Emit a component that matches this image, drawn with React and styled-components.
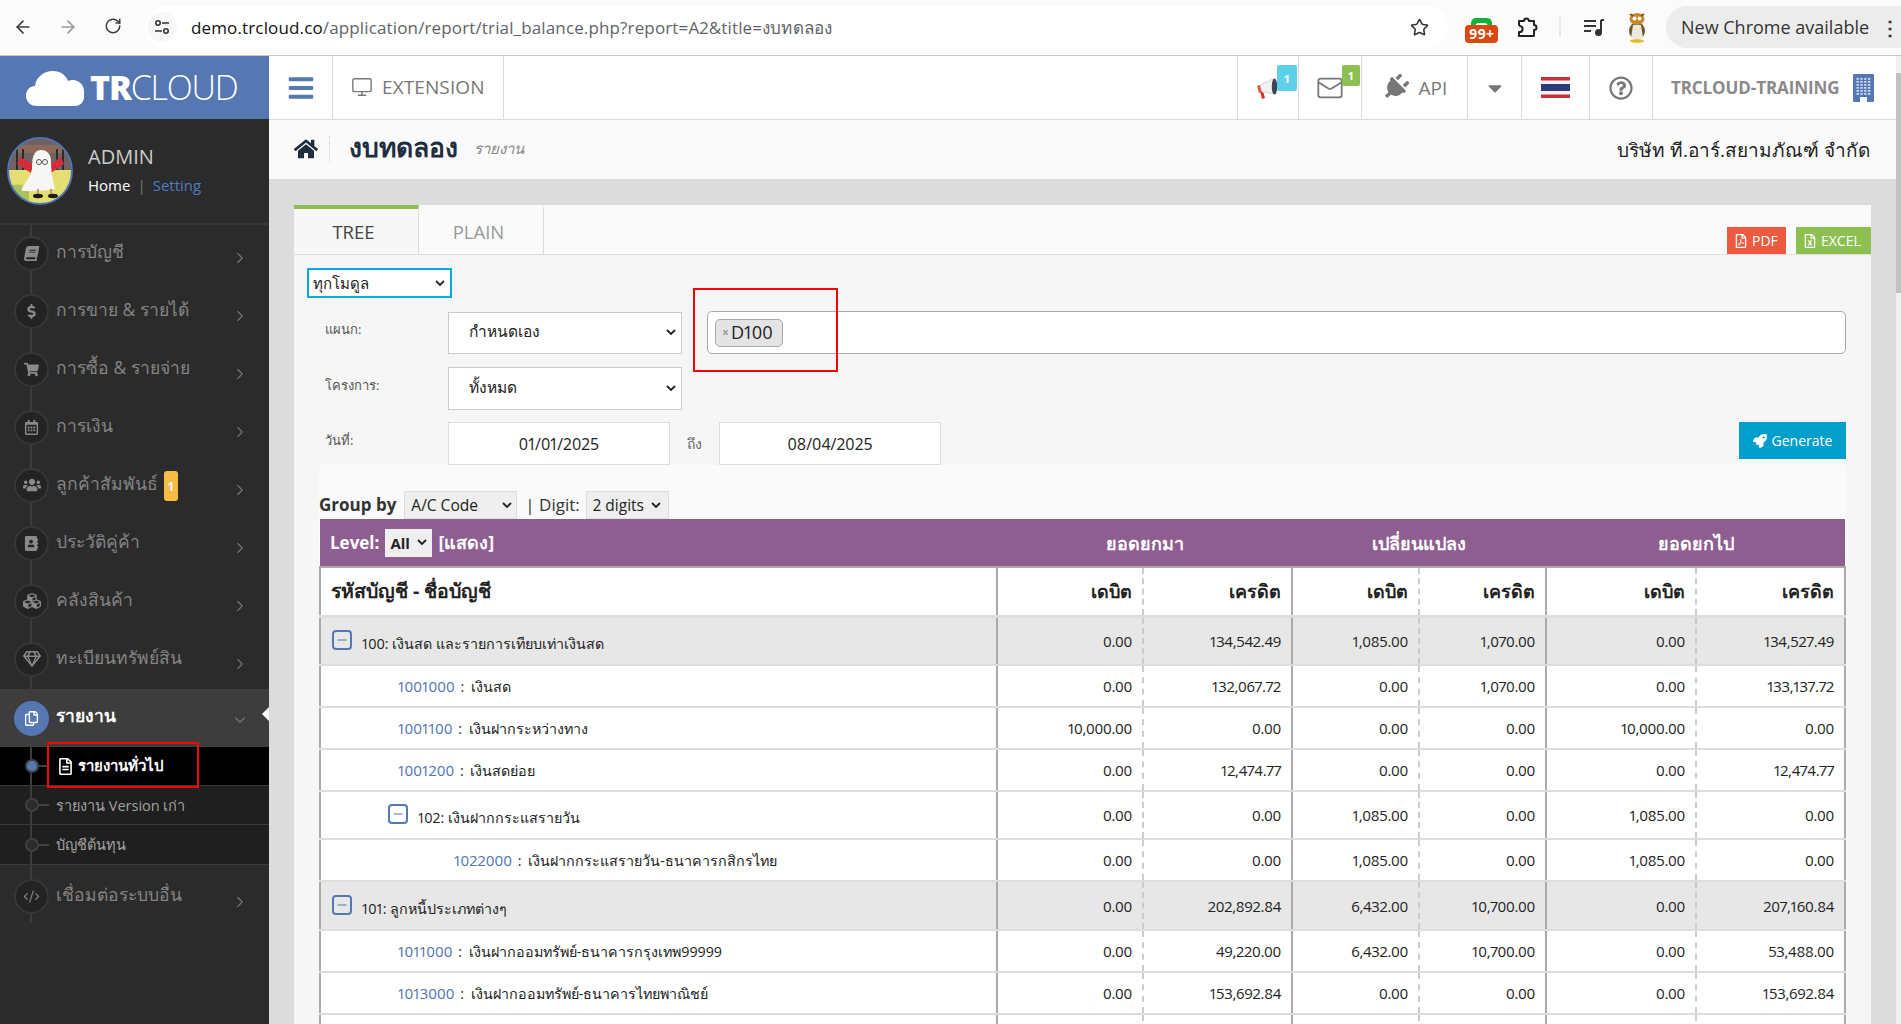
import React from 'react'
import styled, { createGlobalStyle, css } from 'styled-components'
import { ArrowLeft, ArrowRight, RotateCw, Star, Monitor, ChevronRight, ChevronDown, Mail, Minus, CodeXml } from 'lucide-react'
import {
    FaBook, FaDollarSign, FaShoppingCart, FaRegCalendarAlt, FaUsers, FaAddressBook, FaCubes, FaRegGem,
    FaRegCopy, FaRegFileAlt, FaHome, FaBars, FaPlug, FaCaretDown, FaRegQuestionCircle,
    FaRocket, FaRegFilePdf, FaRegFileExcel,
} from 'react-icons/fa'

const Global = createGlobalStyle`
    html, body { margin: 0; height: 100%; overflow: hidden; background: #dcdcdc; }
    body { font-family: "Open Sans", "Noto Sans", sans-serif; color: #222; font-variant-numeric: proportional-nums; }
    * { box-sizing: border-box; }
`;

const arrowImage = `url("data:image/svg+xml,%3Csvg xmlns='http://www.w3.org/2000/svg' width='10' height='7' viewBox='0 0 10 7' fill='none' stroke='%23222' stroke-width='1.8'%3E%3Cpath d='M1 1l4 4 4-4'/%3E%3C/svg%3E")`;

const selectBase = css`
    appearance: none;
    font: inherit;
    border-radius: 0;
    color: #222;
    background-image: ${arrowImage};
    background-repeat: no-repeat;
    background-position: right ${p => p.$ar || 6}px center;
`;

const Shell = styled.div`
    width: 1901px;
    height: 1024px;
    display: flex;
    flex-direction: column;
    overflow: hidden;
`;

/* browser chrome */
const Chrome = styled.div`
    height: 56px;
    flex: none;
    display: flex;
    align-items: center;
    background: #fbfbfb;
    border-bottom: 1px solid #c9c9c9;
    padding-bottom: 1px;
`;

const NavBtn = styled.span`
    width: 45px;
    display: flex;
    justify-content: center;
    color: ${p => p.$off ? '#9a9a9a' : '#3c3c3c'};
`;

const NavGroup = styled.div`
    display: flex;
    width: 145px;
    flex: none;
`;

const Omnibox = styled.div`
    width: 1303px;
    height: 42px;
    border-radius: 21px;
    background: #fff;
    display: flex;
    align-items: center;
    padding: 0 19px 0 2px;
    flex: none;
`;

const Tune = styled.span`
    width: 30px;
    height: 30px;
    border-radius: 50%;
    background: #f7f7f7;
    display: flex;
    align-items: center;
    justify-content: center;
    margin-right: 14px;
`;

const Url = styled.div`
    flex: 1;
    font-size: 17px;
    letter-spacing: 0.14px;
    color: #5f6368;
    white-space: nowrap;
    b { font-weight: 400; color: #111; }
`;

const ChromeRight = styled.div`
    flex: 1;
    display: flex;
    align-items: center;
    padding-left: 17px;
`;

const LineIcon = styled.div`
    position: relative;
    width: 33px;
    height: 28px;
    margin: 4px 18px 0 0;
`;

const LineBadge = styled.span`
    position: absolute;
    left: 0;
    bottom: 0;
    width: 33px;
    height: 18px;
    border-radius: 4px;
    background: #d9480f;
    color: #fff;
    font-size: 14px;
    font-weight: 700;
    line-height: 18px;
    text-align: center;
`;

const ChromeDivider = styled.span`
    width: 2px;
    height: 20px;
    background: #e8e8e8;
    margin: 0 22px 0 21px;
`;

const UpdatePill = styled.div`
    margin-left: 17px;
    width: 236px;
    height: 42px;
    border-radius: 21px 0 0 21px;
    background: #ececec;
    font-size: 18px;
    color: #333;
    display: flex;
    align-items: center;
    padding-left: 15px;
    white-space: nowrap;
`;

const Dots = styled.span`
    margin-left: 11px;
    font-weight: 700;
    font-size: 20px;
`;

/* app frame */
const Frame = styled.div`
    flex: 1;
    min-height: 0;
    display: flex;
`;

const PageCol = styled.div`
    flex: 1;
    min-width: 0;
    display: flex;
    flex-direction: column;
`;

const Scrollbar = styled.div`
    width: 5px;
    flex: none;
    background: #f1f1f1;
    padding-top: 17px;
    &::after {
        content: "";
        display: block;
        height: 220px;
        background: #c1c1c1;
    }
`;

const TopRow = styled.div`
    height: 63px;
    flex: none;
    display: flex;
    background: #fff;
`;

const LogoBlock = styled.div`
    width: 269px;
    flex: none;
    background: #5578b3;
    color: #fff;
    display: flex;
    align-items: center;
    padding-left: 26px;
`;

const LogoText = styled.div`
    margin: -2px 0 0 6px;
    font-size: 34px;
    font-weight: 300;
    letter-spacing: -1.2px;
    font-family: "Open Sans", sans-serif;
    b { font-weight: 800; }
`;

const Burger = styled.div`
    width: 64px;
    display: flex;
    align-items: center;
    justify-content: center;
    color: #5578b3;
    border-right: 1px solid #dcdcdc;
    font-size: 28px;
`;

const ExtBtn = styled.div`
    width: 171px;
    display: flex;
    align-items: center;
    gap: 9px;
    padding: 0 0 2px 18px;
    color: #777;
    font-size: 19px;
    letter-spacing: 0.1px;
    border-right: 1px solid #dcdcdc;
`;

const TopSpacer = styled.div`
    flex: 1;
`;

const TopCell = styled.div`
    position: relative;
    width: ${p => p.$w}px;
    flex: none;
    display: flex;
    align-items: center;
    justify-content: center;
    gap: 10px;
    color: #777;
    font-size: 19px;
    border-left: 1px solid #dcdcdc;
`;

const PlugIcon = styled(FaPlug)`
    transform: rotate(45deg);
`;

const TopBadge = styled.span`
    position: absolute;
    top: 9px;
    right: ${p => p.$r}px;
    width: ${p => p.$w}px;
    height: ${p => p.$h}px;
    background: ${p => p.$bg};
    border-radius: 2px;
    color: #fff;
    font-size: 11px;
    font-weight: 700;
    display: flex;
    align-items: center;
    justify-content: center;
`;

const TrainingCell = styled.div`
    flex: none;
    width: 244px;
    display: flex;
    align-items: center;
    gap: 14px;
    padding-left: 18px;
    border-left: 1px solid #dcdcdc;
    color: #8a8a8a;
    font-size: 17px;
    font-weight: 700;
    letter-spacing: -0.1px;
    white-space: nowrap;
`;

const Body = styled.div`
    flex: 1;
    min-height: 0;
    display: flex;
`;

/* sidebar */
const Side = styled.aside`
    width: 269px;
    flex: none;
    background: #2b2b2b;
    display: flex;
    flex-direction: column;
`;

const UserBox = styled.div`
    height: 106px;
    flex: none;
    display: flex;
    padding: 18px 0 0 7px;
    border-bottom: 2px solid #363636;
`;

const UserText = styled.div`
    margin-left: 15px;
    padding-top: 6px;
`;

const UserName = styled.div`
    font-size: 20px;
    line-height: 28px;
    color: #ccc;
`;

const UserLinks = styled.div`
    margin-top: 4px;
    font-size: 15px;
    color: #fff;
    span { color: #777; margin: 0 7px; }
    a { color: #4f7cc0; }
`;

const MenuItem = styled.div`
    position: relative;
    height: 58px;
    display: flex;
    align-items: center;
    padding: ${p => p.$pt || 0}px 0 0 14px;
    background: ${p => p.$active ? '#3d3d3d' : 'transparent'};
    color: ${p => p.$active ? '#fff' : '#858585'};
    font-size: 17.5px;
    font-weight: ${p => p.$active ? 700 : 400};
    &::before {
        content: "";
        position: absolute;
        left: 30px;
        top: 0;
        bottom: 0;
        width: 2px;
        background: #3c3c3c;
    }
`;

const MenuIcon = styled.span`
    position: relative;
    z-index: 1;
    width: 35px;
    height: 35px;
    border-radius: 50%;
    flex: none;
    margin-top: ${p => p.$active ? 0 : -2}px;
    display: flex;
    align-items: center;
    justify-content: center;
    background: ${p => p.$active ? '#5578b3' : '#232323'};
    border: 2px solid ${p => p.$active ? '#5578b3' : '#363636'};
    color: ${p => p.$active ? '#fff' : '#8a8a8a'};
    font-size: ${p => p.$big ? 18 : 15}px;
`;

const SlantBook = styled(FaBook)`
    transform: skewX(-10deg);
`;

const MenuLabel = styled.span`
    margin-left: 7px;
    margin-top: -5px;
    white-space: nowrap;
`;

const MenuBadge = styled.span`
    margin-left: 6px;
    width: 14px;
    height: 30px;
    border-radius: 3px;
    background: #f6bb42;
    color: #fff;
    font-size: 12px;
    font-weight: 700;
    display: flex;
    align-items: center;
    justify-content: center;
`;

const Chev = styled.span`
    position: absolute;
    left: 231px;
    top: ${p => p.$top || 24}px;
    color: #777;
    display: flex;
`;

const Notch = styled.span`
    position: absolute;
    right: 0;
    top: 18px;
    border: 7px solid transparent;
    border-right-color: #fff;
    border-left: 0;
`;

const SubItem = styled.div`
    position: relative;
    z-index: ${p => p.$on ? 2 : 'auto'};
    height: ${p => p.$h || 39}px;
    display: flex;
    align-items: center;
    padding-left: 56px;
    background: ${p => p.$on ? '#000' : '#1f1f1f'};
    color: ${p => p.$on ? '#fff' : '#a2a2a2'};
    font-size: ${p => p.$on ? 15 : 14.5}px;
    border-bottom: 1px solid #3a3a3a;
    &::before {
        content: "";
        position: absolute;
        left: 30px;
        top: 0;
        bottom: 0;
        width: 2px;
        background: #3c3c3c;
    }
`;

const SubDot = styled.span`
    position: absolute;
    left: 25px;
    top: 50%;
    margin-top: -7px;
    width: 14px;
    height: 14px;
    border-radius: 50%;
    background: ${p => p.$on ? '#5578b3' : '#2c2c2c'};
    border: 2px solid #404040;
    &::after {
        content: "";
        position: absolute;
        left: 12px;
        top: 4px;
        width: 10px;
        height: 2px;
        background: #404040;
    }
`;

const RedMark = styled.span`
    position: absolute;
    z-index: 3;
    border: 2px solid #f00;
    left: ${p => p.$l}px;
    top: ${p => p.$t}px;
    width: ${p => p.$w}px;
    height: ${p => p.$h}px;
    pointer-events: none;
`;

const SubOnLabel = styled.span`
    display: flex;
    align-items: center;
    gap: 4px;
    margin-left: 1px;
    font-weight: 600;
    white-space: nowrap;
`;

/* main */
const Main = styled.main`
    flex: 1;
    min-width: 0;
    display: flex;
    flex-direction: column;
    background: #dcdcdc;
`;

const Crumb = styled.div`
    height: 60px;
    flex: none;
    background: #fafafa;
    border-top: 1px solid #dcdcdc;
    display: flex;
    align-items: center;
    padding: 0 26px 0 25px;
`;

const HomeBtn = styled.span`
    display: flex;
    width: 36px;
    height: 26px;
    margin-top: -2px;
    align-items: center;
    color: #1e2d40;
    font-size: 24px;
    border-right: 1px dotted #ccc;
`;

const Title = styled.h1`
    margin: -3px 0 0 19px;
    font-size: 26.5px;
    font-weight: 600;
    color: #1e2d40;
`;

const SubTitle = styled.span`
    margin: -2px 0 0 16px;
    font-size: 15px;
    font-style: italic;
    color: #888;
`;

const Company = styled.div`
    margin-left: auto;
    font-size: 19px;
    color: #222;
`;

const Panel = styled.section`
    margin: 26px 25px 0 25px;
    flex: 1;
    min-height: 0;
    display: flex;
    flex-direction: column;
    background: #f6f6f6;
    overflow: hidden;
`;

const TabRow = styled.div`
    height: 50px;
    flex: none;
    display: flex;
    align-items: stretch;
    background: #fafafa;
    border-bottom: 1px solid #ddd;
`;

const Tab = styled.div`
    width: ${p => p.$w}px;
    display: flex;
    align-items: center;
    justify-content: center;
    padding-right: 5px;
    background: ${p => p.$on ? '#f7f7f7' : '#fafafa'};
    border-top: 4px solid ${p => p.$on ? '#8cc152' : 'transparent'};
    border-right: 1px solid #ddd;
    color: ${p => p.$on ? '#444' : '#999'};
    font-size: 18.5px;
    font-weight: 500;
`;

const Exports = styled.div`
    margin-left: auto;
    display: flex;
    align-items: flex-end;
    gap: 10px;
`;

const ExportBtn = styled.span`
    height: 27px;
    padding: 0 7px;
    width: ${p => p.$w}px;
    background: ${p => p.$bg};
    color: #fff;
    font-size: 14px;
    display: flex;
    align-items: center;
    gap: 4px;
    white-space: nowrap;
`;

const FormArea = styled.div`
    height: 210px;
    flex: none;
    padding: 13px 25px 0 13px;
    display: flex;
    flex-direction: column;
`;

const ModuleSelect = styled.select`
    ${selectBase}
    width: 145px;
    height: 30px;
    border: 2px solid #00aee0;
    background-color: #fff;
    font-size: 15px;
    padding: 0 0 0 4px;
`;

const FormRow = styled.div`
    display: flex;
    align-items: center;
    margin-top: ${p => p.$mt}px;
`;

const FieldLabel = styled.label`
    width: 141px;
    padding-left: 18px;
    flex: none;
    font-size: 13px;
    color: #555;
    align-self: flex-start;
    margin-top: 8px;
`;

const FieldSelect = styled.select`
    ${selectBase}
    width: 234px;
    height: ${p => p.$h}px;
    border: 1px solid #ccc;
    background-color: #fff;
    font-size: 15.5px;
    padding: 0 0 3px 20px;
`;

const TagBox = styled.div`
    position: relative;
    width: 1139px;
    height: 43px;
    margin-left: 25px;
    border: 1px solid #aaa;
    border-radius: 5px;
    background: #fff;
    display: flex;
    align-items: center;
    padding-left: 7px;
`;

const Chip = styled.span`
    width: 68px;
    height: 28px;
    background: #e4e4e4;
    border: 1px solid #aaa;
    border-radius: 5px;
    font-size: 18px;
    display: flex;
    align-items: center;
    padding: 0 0 1px 6px;
    gap: 2px;
    color: #222;
    i { font-style: normal; color: #999; font-size: 12px; font-weight: 700; }
`;

const DateInput = styled.input`
    width: 222px;
    height: 43px;
    border: 1px solid #ddd;
    background: #fff;
    font: inherit;
    font-size: 16px;
    text-align: center;
    color: #222;
`;

const DateSep = styled.span`
    width: 49px;
    text-align: center;
    font-size: 14px;
    color: #666;
`;

const GenerateBtn = styled.button`
    margin-left: auto;
    margin-bottom: 6px;
    width: 107px;
    height: 37px;
    border: 0;
    background: #009ecb;
    color: #fff;
    font: inherit;
    font-size: 14px;
    display: flex;
    align-items: center;
    justify-content: center;
    gap: 5px;
`;

const Report = styled.div`
    flex: 1;
    min-height: 0;
    margin: 0 25px;
    background: #fafafa;
    display: flex;
    flex-direction: column;
`;

const GroupRow = styled.div`
    height: 54px;
    flex: none;
    display: flex;
    align-items: flex-end;
    font-size: 17px;
    color: #333;
    b { font-weight: 700; }
`;

const GroupText = styled.span`
    padding-bottom: 3px;
    margin-right: ${p => p.$mr}px;
`;

const MiniSelect = styled.select`
    ${selectBase}
    width: ${p => p.$w}px;
    height: 28px;
    border: 1px solid #ddd;
    background-color: #efefef;
    font-size: 15.5px;
    padding: 0 0 1px 6px;
    margin-right: ${p => p.$mr || 0}px;
`;

const Table = styled.table`
    width: 1525px;
    border-collapse: collapse;
    table-layout: fixed;
    background: #fff;
    font-size: 15px;
    letter-spacing: -0.3px;
    line-height: 20px;
    color: #222;
`;

const PurpleCell = styled.th`
    height: 48px;
    background: #8f5e91;
    color: #fff;
    font-size: 18px;
    font-weight: 700;
    letter-spacing: 0;
    text-align: ${p => p.$left ? 'left' : 'center'};
    padding: ${p => p.$left ? '0 0 0 10px' : 0};
    white-space: nowrap;
`;

const LevelText = styled.span`
    font-size: 17px;
`;

const LevelSelect = styled.select`
    ${selectBase}
    width: 47px;
    height: 28px;
    margin: 0 6px;
    border: 0;
    background-color: #efefef;
    font-weight: 700;
    font-size: 15px;
    padding-left: 5px;
`;

const HeadCell = styled.th`
    height: 49px;
    background: #fff;
    letter-spacing: 0;
    text-align: ${p => p.$left ? 'left' : 'right'};
    padding: ${p => p.$left ? '0 0 0 10px' : '0 10px 0 0'};
    font-size: ${p => p.$left ? 19.5 : 18}px;
    font-weight: 700;
    border-top: 2px solid #aaa;
    border-bottom: 3px solid #ddd;
    border-left: ${p => p.$dash ? '2px dashed #ccc' : '2px solid #aaa'};
    &:last-child { border-right: 2px solid #aaa; }
`;

const Cell = styled.td`
    height: ${p => p.$h}px;
    padding: 0 10px 0 0;
    text-align: right;
    background: ${p => p.$grey ? '#e7e7e7' : '#fff'};
    border-bottom: 2px solid #ddd;
    border-left: ${p => p.$dash ? '2px dashed #ccc' : '2px solid #aaa'};
    white-space: nowrap;
    &:last-child { border-right: 2px solid #aaa; }
`;

const NameCell = styled(Cell)`
    text-align: left;
    font-size: 14.3px;
    letter-spacing: 0;
    padding: 0 0 0 ${p => p.$indent}px;
`;

const GroupName = styled.span`
    display: flex;
    height: 28px;
    padding-top: 3px;
    align-items: flex-start;
    gap: 10px;
    & > span:last-child { margin-top: 4px; }
`;

const Toggle = styled.span`
    width: 20px;
    height: 20px;
    flex: none;
    border: 2px solid #5578b3;
    border-radius: 4px;
    color: #5578b3;
    display: flex;
    align-items: center;
    justify-content: center;
`;

const Code = styled.a`
    color: #4f73b3;
    font-size: 15px;
    margin-right: 2px;
`;

const Colon = styled.span`
    margin-right: 3px;
`;

const rows = [
    { kind: 'group', indent: 11, h: 49, label: '100: เงินสด และรายการเทียบเท่าเงินสด', v: ['0.00', '134,542.49', '1,085.00', '1,070.00', '0.00', '134,527.49'] },
    { indent: 77, h: 42, code: '1001000', label: 'เงินสด', v: ['0.00', '132,067.72', '0.00', '1,070.00', '0.00', '133,137.72'] },
    { indent: 77, h: 42, code: '1001100', label: 'เงินฝากระหว่างทาง', v: ['10,000.00', '0.00', '0.00', '0.00', '10,000.00', '0.00'] },
    { indent: 77, h: 42, code: '1001200', label: 'เงินสดย่อย', v: ['0.00', '12,474.77', '0.00', '0.00', '0.00', '12,474.77'] },
    { kind: 'sub', indent: 67, h: 48, label: '102: เงินฝากกระแสรายวัน', v: ['0.00', '0.00', '1,085.00', '0.00', '1,085.00', '0.00'] },
    { indent: 133, h: 42, code: '1022000', label: 'เงินฝากกระแสรายวัน-ธนาคารกสิกรไทย', v: ['0.00', '0.00', '1,085.00', '0.00', '1,085.00', '0.00'] },
    { kind: 'group', indent: 11, h: 49, label: '101: ลูกหนี้ประเภทต่างๆ', v: ['0.00', '202,892.84', '6,432.00', '10,700.00', '0.00', '207,160.84'] },
    { indent: 77, h: 42, code: '1011000', label: 'เงินฝากออมทรัพย์-ธนาคารกรุงเทพ99999', v: ['0.00', '49,220.00', '6,432.00', '10,700.00', '0.00', '53,488.00'] },
    { indent: 77, h: 42, code: '1013000', label: 'เงินฝากออมทรัพย์-ธนาคารไทยพาณิชย์', v: ['0.00', '153,692.84', '0.00', '0.00', '0.00', '153,692.84'] },
]

const menu = [
    ['การบัญชี', SlantBook],
    ['การขาย & รายได้', FaDollarSign],
    ['การซื้อ & รายจ่าย', FaShoppingCart],
    ['การเงิน', FaRegCalendarAlt],
    ['ลูกค้าสัมพันธ์', FaUsers, '1', true],
    ['ประวัติคู่ค้า', FaAddressBook],
    ['คลังสินค้า', FaCubes, null, true],
    ['ทะเบียนทรัพย์สิน', FaRegGem, null, true],
]

function Avatar() {
    return (
        <svg width="66" height="68" viewBox="0 0 66 68" style={{ flex: 'none' }}>
            <defs>
                <clipPath id="av"><ellipse cx="33" cy="34" rx="32" ry="33" /></clipPath>
            </defs>
            <g clipPath="url(#av)">
                <rect width="66" height="68" fill="#6f6260" />
                <path d="M0 8h66v8H0z" fill="#8a6a58" />
                <path d="M10 12v22M16 12v22M50 12v22M56 12v22" stroke="#2e2a2a" strokeWidth="2" />
                <rect y="33" width="66" height="35" fill="#e4df74" />
                <path d="M0 50q12-6 22 2v16H0z" fill="#a9c25c" />
                <path d="M26 27 L13 20 L10 27 L24 36Z M43 27 L54 20 L57 27 L44 36Z" fill="#d42c3a" />
                <path d="M34 13C26 13 25 22 25 32 C24 42 13 50 15 54 C24 54 34 54 48 52 C45 42 44 32 44 24 C44 17 40 13 34 13Z" fill="#f6f6f6" />
                <circle cx="32" cy="25" r="2.5" fill="none" stroke="#555" />
                <circle cx="38" cy="25" r="2.5" fill="none" stroke="#555" />
                <path d="M31 52v6M44 52v6" stroke="#c9986a" strokeWidth="2" />
                <ellipse cx="31" cy="59" rx="5" ry="2.2" fill="#1c1c1c" />
                <ellipse cx="46" cy="59" rx="5" ry="2.2" fill="#1c1c1c" />
            </g>
            <ellipse cx="33" cy="34" rx="32" ry="33" fill="none" stroke="#4f73b3" strokeWidth="2" />
        </svg>
    )
}

function TunesIcon() {
    return (
        <svg width="18" height="18" viewBox="0 0 18 18" fill="none" stroke="#333" strokeWidth="1.6">
            <circle cx="5" cy="5" r="2.2" />
            <path d="M9 5h7M2 13h7" />
            <circle cx="13" cy="13" r="2.2" />
        </svg>
    )
}

function Flag() {
    return (
        <svg width="29" height="21" viewBox="0 0 29 21">
            <rect width="29" height="21" fill="#c8303a" />
            <rect y="3.5" width="29" height="14" fill="#f3f3f3" />
            <rect y="7" width="29" height="7" fill="#2d3a78" />
        </svg>
    )
}

function Horn() {
    return (
        <svg width="24" height="24" viewBox="0 0 24 24">
            <path d="M4 15l3 0 2 7-3 1z" fill="#d9332b" />
            <path d="M1 10l3-1 2 7-3 1z" fill="#e2534a" />
            <path d="M4 9L17 3l3 15-14-2z" fill="#f2f2f2" stroke="#bbb" strokeWidth="0.6" />
            <ellipse cx="18.5" cy="10.5" rx="2.7" ry="8" fill="#3c4650" />
        </svg>
    )
}

function BuildingIcon() {
    const dots = []
    for (let y = 0; y < 6; y++) {
        for (let x = 0; x < 4; x++) {
            dots.push(<rect key={`${x}-${y}`} x={3.5 + x * 3.8} y={4 + y * 3} width="2.4" height="1.8" fill="#cdd8ec" />)
        }
    }
    return (
        <svg width="21" height="28" viewBox="0 0 21 28" style={{ flex: 'none' }}>
            <rect width="21" height="28" rx="1" fill="#5578b3" />
            {dots}
            <rect x="7" y="23" width="7" height="5" fill="#fff" />
        </svg>
    )
}

function App() {
    return (
        <Shell>
            <Global />
            <Chrome>
                <NavGroup>
                    <NavBtn><ArrowLeft size={20} /></NavBtn>
                    <NavBtn $off><ArrowRight size={20} /></NavBtn>
                    <NavBtn><RotateCw size={18} /></NavBtn>
                </NavGroup>
                <Omnibox>
                    <Tune><TunesIcon /></Tune>
                    <Url><b>demo.trcloud.co</b>/application/report/trial_balance.php?report=A2&amp;title=งบทดลอง</Url>
                    <Star size={19} color="#333" />
                </Omnibox>
                <ChromeRight>
                    <LineIcon>
                        <svg width="33" height="14" viewBox="0 0 33 14">
                            <path d="M6 14V5a5 5 0 0 1 5-5h11a5 5 0 0 1 5 5v9z" fill="#10b23a" />
                            <rect x="10" y="5" width="13" height="9" rx="4" fill="#fff" />
                        </svg>
                        <LineBadge>99+</LineBadge>
                    </LineIcon>
                    <svg width="22" height="24" viewBox="0 0 22 24" fill="none" stroke="#222" strokeWidth="2" strokeLinejoin="round">
                        <path d="M3 6h5a2.5 2.5 0 0 1 5 0h5v4a2.5 2.5 0 0 1 0 5v6H3v-4a3 3 0 0 0 1-6 3 3 0 0 0-1-1z" />
                    </svg>
                    <ChromeDivider />
                    <svg width="22" height="20" viewBox="0 0 22 20" fill="none" stroke="#333" strokeWidth="2">
                        <path d="M1 4h12M1 9h12M1 14h7M18 3v12M18 3h3" />
                        <circle cx="15.5" cy="15.5" r="2.5" fill="#333" />
                    </svg>
                    <svg width="24" height="32" viewBox="0 0 24 32" style={{ marginLeft: 20 }}>
                        <ellipse cx="12" cy="20" rx="8" ry="9" fill="#6b5a2a" />
                        <path d="M8 14h8l2 13-6 3-6-3z" fill="#ece8dc" />
                        <ellipse cx="12" cy="30" rx="7" ry="1.8" fill="#e8b820" />
                        <ellipse cx="12" cy="8" rx="7.5" ry="6" fill="#c8862a" />
                        <path d="M5 3l3 2M19 3l-3 2" stroke="#7a5014" strokeWidth="2" />
                        <circle cx="9.5" cy="7.5" r="2" fill="#fff" />
                        <circle cx="14.5" cy="7.5" r="2" fill="#fff" />
                    </svg>
                    <UpdatePill>New Chrome available<Dots>⋮</Dots></UpdatePill>
                </ChromeRight>
            </Chrome>
            <Frame>
                <PageCol>
                    <TopRow>
                        <LogoBlock>
                            <svg width="58" height="36" viewBox="0 0 58 36" fill="#fff">
                                <path d="M11 36C4 36 0 31 0 26c0-6 4-10 9-10 1-9 9-15 18-15 7 0 13 4 15 10 2-1 3-1 5-1 6 0 11 5 11 11v6c0 5-4 9-9 9z" />
                            </svg>
                            <LogoText><b>TR</b>CLOUD</LogoText>
                        </LogoBlock>
                        <Burger><FaBars /></Burger>
                        <ExtBtn><Monitor size={22} strokeWidth={1.5} />EXTENSION</ExtBtn>
                        <TopSpacer />
                        <TopCell $w={61}>
                            <Horn />
                            <TopBadge $r={1} $w={20} $h={26} $bg="#5fd0ea">1</TopBadge>
                        </TopCell>
                        <TopCell $w={63}>
                            <Mail size={28} strokeWidth={1.5} />
                            <TopBadge $r={1} $w={18} $h={21} $bg="#8cc152">1</TopBadge>
                        </TopCell>
                        <TopCell $w={106}><PlugIcon size={27} />API</TopCell>
                        <TopCell $w={54}><FaCaretDown size={22} /></TopCell>
                        <TopCell $w={68}><Flag /></TopCell>
                        <TopCell $w={63}><FaRegQuestionCircle size={24} /></TopCell>
                        <TrainingCell>TRCLOUD-TRAINING<BuildingIcon /></TrainingCell>
                    </TopRow>
                    <Body>
                        <Side>
                            <UserBox>
                                <Avatar />
                                <UserText>
                                    <UserName>ADMIN</UserName>
                                    <UserLinks>Home<span>|</span><a>Setting</a></UserLinks>
                                </UserText>
                            </UserBox>
                            <div>
                                {menu.map(([label, Icon, badge, big]) => (
                                    <MenuItem key={label}>
                                        <MenuIcon $big={big}><Icon /></MenuIcon>
                                        <MenuLabel>{label}</MenuLabel>
                                        {badge && <MenuBadge>{badge}</MenuBadge>}
                                        <Chev><ChevronRight size={18} strokeWidth={1.5} /></Chev>
                                    </MenuItem>
                                ))}
                                <MenuItem $active>
                                    <MenuIcon $active><FaRegCopy /></MenuIcon>
                                    <MenuLabel>รายงาน</MenuLabel>
                                    <Chev $top={22}><ChevronDown size={18} strokeWidth={1.5} /></Chev>
                                    <Notch />
                                </MenuItem>
                                <SubItem $on>
                                    <SubDot $on />
                                    <SubOnLabel><FaRegFileAlt size={17} />รายงานทั่วไป</SubOnLabel>
                                    <RedMark $l={47} $t={-5} $w={152} $h={46} />
                                </SubItem>
                                <SubItem><SubDot />รายงาน Version เก่า</SubItem>
                                <SubItem $h={40}><SubDot />บัญชีต้นทุน</SubItem>
                                <MenuItem $pt={6}>
                                    <MenuIcon><CodeXml size={17} strokeWidth={1.6} /></MenuIcon>
                                    <MenuLabel>เชื่อมต่อระบบอื่น</MenuLabel>
                                    <Chev $top={28}><ChevronRight size={18} strokeWidth={1.5} /></Chev>
                                </MenuItem>
                            </div>
                        </Side>
                        <Main>
                            <Crumb>
                                <HomeBtn><FaHome /></HomeBtn>
                                <Title>งบทดลอง</Title>
                                <SubTitle>รายงาน</SubTitle>
                                <Company>บริษัท ที.อาร์.สยามภัณฑ์ จำกัด</Company>
                            </Crumb>
                            <Panel>
                                <TabRow>
                                    <Tab $on $w={125}>TREE</Tab>
                                    <Tab $w={125}>PLAIN</Tab>
                                    <Exports>
                                        <ExportBtn $bg="#ed5a40" $w={59}><FaRegFilePdf />PDF</ExportBtn>
                                        <ExportBtn $bg="#8cc152" $w={75}><FaRegFileExcel />EXCEL</ExportBtn>
                                    </Exports>
                                </TabRow>
                                <FormArea>
                                    <ModuleSelect $ar={5} defaultValue="all"><option value="all">ทุกโมดูล</option></ModuleSelect>
                                    <FormRow $mt={13}>
                                        <FieldLabel>แผนก:</FieldLabel>
                                        <FieldSelect $h={42} $ar={5}><option>กำหนดเอง</option></FieldSelect>
                                        <TagBox>
                                            <Chip><i>×</i>D100</Chip>
                                            <RedMark $l={-15} $t={-24} $w={145} $h={84} />
                                        </TagBox>
                                    </FormRow>
                                    <FormRow $mt={13}>
                                        <FieldLabel>โครงการ:</FieldLabel>
                                        <FieldSelect $h={43} $ar={5}><option>ทั้งหมด</option></FieldSelect>
                                    </FormRow>
                                    <FormRow $mt={12}>
                                        <FieldLabel>วันที่:</FieldLabel>
                                        <DateInput defaultValue="01/01/2025" />
                                        <DateSep>ถึง</DateSep>
                                        <DateInput defaultValue="08/04/2025" />
                                        <GenerateBtn><FaRocket />Generate</GenerateBtn>
                                    </FormRow>
                                </FormArea>
                                <Report>
                                    <GroupRow>
                                        <GroupText $mr={8}><b>Group by</b></GroupText>
                                        <MiniSelect $w={113} $mr={8} $ar={4}><option>A/C Code</option></MiniSelect>
                                        <GroupText $mr={6}>| Digit:</GroupText>
                                        <MiniSelect $w={83} $ar={7}><option>2 digits</option></MiniSelect>
                                    </GroupRow>
                                    <Table>
                                        <colgroup>
                                            {[677, 146, 149, 127, 127, 150, 149].map((w, i) => <col key={i} style={{ width: w }} />)}
                                        </colgroup>
                                        <thead>
                                            <tr>
                                                <PurpleCell $left><LevelText>Level:</LevelText><LevelSelect $ar={5}><option>All</option></LevelSelect>[แสดง]</PurpleCell>
                                                <PurpleCell colSpan={2}>ยอดยกมา</PurpleCell>
                                                <PurpleCell colSpan={2}>เปลี่ยนแปลง</PurpleCell>
                                                <PurpleCell colSpan={2}>ยอดยกไป</PurpleCell>
                                            </tr>
                                            <tr>
                                                <HeadCell $left>รหัสบัญชี - ชื่อบัญชี</HeadCell>
                                                <HeadCell>เดบิต</HeadCell>
                                                <HeadCell $dash>เครดิต</HeadCell>
                                                <HeadCell>เดบิต</HeadCell>
                                                <HeadCell $dash>เครดิต</HeadCell>
                                                <HeadCell>เดบิต</HeadCell>
                                                <HeadCell $dash>เครดิต</HeadCell>
                                            </tr>
                                        </thead>
                                        <tbody>
                                            {rows.map((r, i) => (
                                                <tr key={i}>
                                                    <NameCell $h={r.h} $indent={r.indent} $grey={r.kind === 'group'}>
                                                        {r.kind ? (
                                                            <GroupName>
                                                                <Toggle><Minus size={14} strokeWidth={2} /></Toggle>
                                                                <span>{r.label}</span>
                                                            </GroupName>
                                                        ) : (
                                                            <><Code>{r.code}</Code> <Colon>:</Colon> {r.label}</>
                                                        )}
                                                    </NameCell>
                                                    {r.v.map((n, j) => (
                                                        <Cell key={j} $h={r.h} $grey={r.kind === 'group'} $dash={j % 2 === 1}>{n}</Cell>
                                                    ))}
                                                </tr>
                                            ))}
                                            <tr>
                                                <NameCell $h={20} $indent={0} />
                                                {[0, 1, 2, 3, 4, 5].map(j => <Cell key={j} $h={20} $dash={j % 2 === 1} />)}
                                            </tr>
                                        </tbody>
                                    </Table>
                                </Report>
                            </Panel>
                        </Main>
                    </Body>
                </PageCol>
                <Scrollbar />
            </Frame>
        </Shell>
    )
}

export default App
